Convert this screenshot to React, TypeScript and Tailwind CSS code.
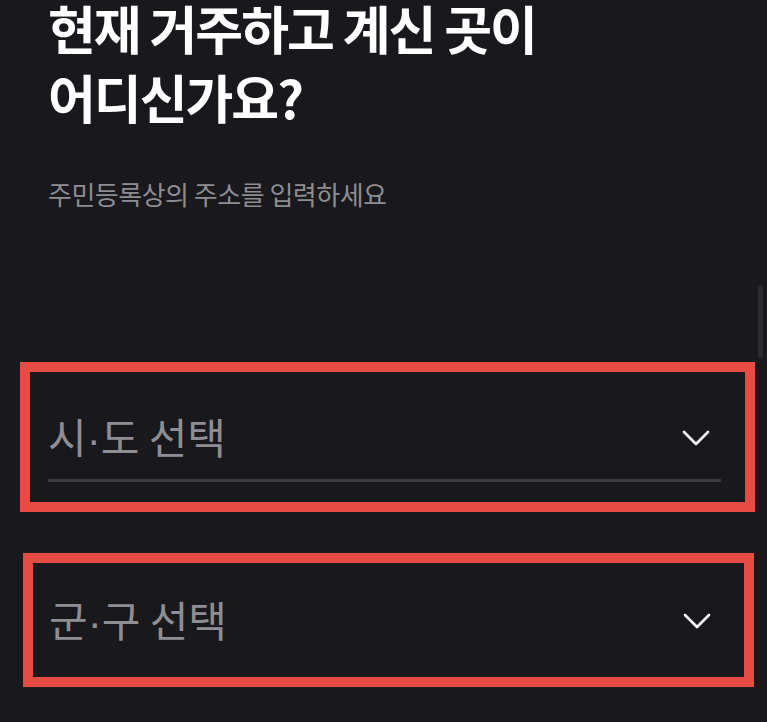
const ChevronDown = () => (
  <svg width="28" height="16" viewBox="0 0 28 16" fill="none">
    <path
      d="M2 2 L14 14 L26 2"
      stroke="#ffffff"
      strokeWidth="2.6"
      strokeLinecap="round"
      strokeLinejoin="round"
    />
  </svg>
);

const SelectLabel = ({ first, second }: { first: string; second: string }) => (
  <span className="text-[42px] leading-[48px] text-[#8e8e94]">
    {first}
    <span className="font-['Liberation_Sans',sans-serif]">·</span>
    {second} 선택
  </span>
);

export default function App() {
  return (
    <div className="relative min-h-[722px] w-full overflow-hidden bg-[#19181d] font-['Noto_Sans_CJK_KR',sans-serif]">
      {/* overlay scroll indicator */}
      <div className="absolute right-[4px] top-[285px] h-[73px] w-[5px] rounded-full bg-[#2a2a30]" />

      <div className="px-[48px]">
        <h1 className="text-[52px] font-bold tracking-[-2px] text-white">
          <div className="leading-[56px]">현재 거주하고 계신 곳이</div>
          <div className="mt-[13px] leading-[56px]">어디신가요?</div>
        </h1>
        <p className="mt-[53px] text-[26px] leading-[32px] tracking-[-0.5px] text-[#8d8d93]">
          주민등록상의 주소를 입력하세요
        </p>
      </div>

      <div className="mt-[152px] flex flex-col">
        <div className="ml-[20px] h-[150px] w-[735px] border-[10px] border-[#e64c43]">
          <div className="ml-[18px] mr-[24px] mt-[42px] border-b-[3px] border-[#3a3b42] pb-[17px]">
            <div className="flex h-[48px] items-center justify-between pr-[11px]">
              <SelectLabel first="시" second="도" />
              <ChevronDown />
            </div>
          </div>
        </div>

        <div className="ml-[23px] mt-[41px] h-[134px] w-[731px] border-[10px] border-[#e64c43]">
          <div className="ml-[16px] mr-[33px] mt-[34px]">
            <div className="flex h-[48px] items-center justify-between">
              <SelectLabel first="군" second="구" />
              <ChevronDown />
            </div>
          </div>
        </div>
      </div>
    </div>
  );
}
